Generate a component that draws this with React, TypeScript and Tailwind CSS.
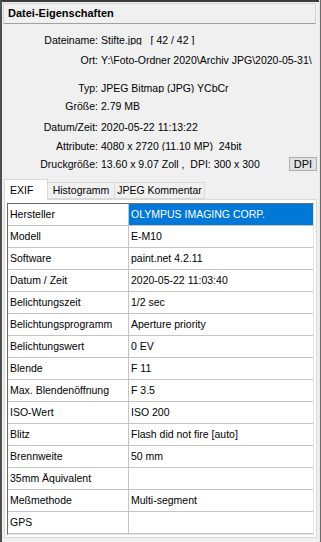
import React from 'react';

const infoRows: { label: string; value: string; mt: string }[] = [
  { label: 'Dateiname:', value: 'Stifte.jpg   [ 42 / 42 ]', mt: 'mt-[7px]' },
  { label: 'Ort:', value: 'Y:\\Foto-Ordner 2020\\Archiv JPG\\2020-05-31\\', mt: 'mt-[2px]' },
  { label: 'Typ:', value: 'JPEG Bitmap (JPG) YCbCr', mt: 'mt-[10px]' },
  { label: 'Größe:', value: '2.79 MB', mt: 'mt-0' },
  { label: 'Datum/Zeit:', value: '2020-05-22 11:13:22', mt: 'mt-[3px]' },
  { label: 'Attribute:', value: '4080 x 2720 (11.10 MP)  24bit', mt: 'mt-[1px]' },
];

const exifRows: [string, string][] = [
  ['Hersteller', 'OLYMPUS IMAGING CORP.'],
  ['Modell', 'E-M10'],
  ['Software', 'paint.net 4.2.11'],
  ['Datum / Zeit', '2020-05-22 11:03:40'],
  ['Belichtungszeit', '1/2 sec'],
  ['Belichtungsprogramm', 'Aperture priority'],
  ['Belichtungswert', '0 EV'],
  ['Blende', 'F 11'],
  ['Max. Blendenöffnung', 'F 3.5'],
  ['ISO-Wert', 'ISO 200'],
  ['Blitz', 'Flash did not fire [auto]'],
  ['Brennweite', '50 mm'],
  ['35mm Äquivalent', ''],
  ['Meßmethode', 'Multi-segment'],
  ['GPS', ''],
];

export default function App() {
  return (
    <div className="flex h-[542px] w-[321px] overflow-hidden bg-[#f0f0f0] font-['Liberation_Sans',Arial,sans-serif] text-[10.5px] leading-none text-black">
      {/* window edge */}
      <div className="w-[2px] shrink-0 bg-[#4e4e4e]" />
      <div className="flex min-w-0 flex-1 flex-col">
        <div className="h-[2px] shrink-0 bg-[#3a3a3a]" />
        {/* title box */}
        <div className="ml-px mr-[3px] mt-px flex h-[21px] shrink-0 items-center border border-[#d4d4d4] border-b-[#a0a0a0] pl-[4px] text-[11px] font-bold">
          Datei-Eigenschaften
        </div>

        {/* file info */}
        {infoRows.map((r) => (
          <div key={r.label} className={`flex h-[18px] shrink-0 items-center ${r.mt}`}>
            <div className="w-[96px] shrink-0 text-right">{r.label}</div>
            <div className="min-w-0 flex-1 overflow-hidden whitespace-pre pl-[3px]">{r.value}</div>
          </div>
        ))}
        <div className="flex h-[18px] shrink-0 items-center">
          <div className="w-[96px] shrink-0 text-right">Druckgröße:</div>
          <div className="min-w-0 flex-1 whitespace-pre pl-[3px]">13.60 x 9.07 Zoll ,  DPI: 300 x 300</div>
          <button className="mr-[2px] flex h-[14px] w-[28px] shrink-0 items-center justify-center border border-[#adadad] bg-[#e1e1e1] text-[11px]">
            DPI
          </button>
        </div>

        {/* tabs */}
        <div className="ml-[2px] mt-[6px] flex h-[20px] shrink-0 items-end">
          <div className="relative z-10 -mb-px flex h-[21px] w-[44px] items-center border border-b-0 border-[#d9d9d9] bg-white pl-[5px]">
            EXIF
          </div>
          <div className="flex h-[17px] w-[67px] items-center justify-center border border-l-0 border-[#d9d9d9] bg-[#f0f0f0]">
            Histogramm
          </div>
          <div className="flex h-[17px] w-[90px] items-center justify-center border border-l-0 border-[#d9d9d9] bg-[#f0f0f0]">
            JPEG Kommentar
          </div>
        </div>

        {/* tab page */}
        <div className="ml-[2px] mr-[2px] flex flex-col border border-[#d9d9d9] bg-white pb-[2px] pl-[2px] pr-[2px] pt-[3px]">
          <div className="flex flex-col border border-l-[#696969] border-t-[#696969] border-r-[#e3e3e3] border-b-[#e3e3e3]">
            {exifRows.map(([k, v], i) => (
              <div key={k} className="flex h-[22px] border-b border-[#c4c4c4]">
                <div className="flex w-[121px] shrink-0 items-center border-r border-[#c4c4c4] pl-[2px]">{k}</div>
                <div
                  className={`flex min-w-0 flex-1 items-center pl-[2px] ${
                    i === 0 ? 'bg-[#0078d7] text-white' : ''
                  }`}
                >
                  {v}
                </div>
              </div>
            ))}
          </div>
        </div>
      </div>
      <div className="w-[2px] shrink-0 border-l border-[#e6e6e6] bg-[#6b6b6b]" />
    </div>
  );
}
